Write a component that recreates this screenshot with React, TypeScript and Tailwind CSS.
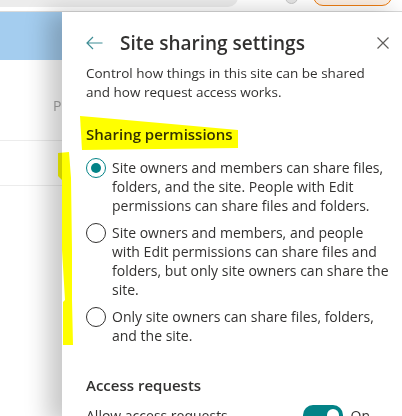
import React, { useState } from 'react'

type Choice = {
  id: string
  lines: string[]
}

const choices: Choice[] = [
  {
    id: 'members',
    lines: [
      'Site owners and members can share files,',
      'folders, and the site. People with Edit',
      'permissions can share files and folders.',
    ],
  },
  {
    id: 'members-edit',
    lines: [
      'Site owners and members, and people',
      'with Edit permissions can share files and',
      'folders, but only site owners can share the',
      'site.',
    ],
  },
  {
    id: 'owners',
    lines: ['Only site owners can share files, folders,', 'and the site.'],
  },
]

function Radio({ checked }: { checked: boolean }) {
  return (
    <span
      className={`flex h-[20px] w-[20px] shrink-0 items-center justify-center rounded-full border ${
        checked ? 'border-[#038387]' : 'border-[#323130]'
      }`}
    >
      {checked && <span className="h-[10px] w-[10px] rounded-full bg-[#038387]" />}
    </span>
  )
}

export default function App() {
  const [selected, setSelected] = useState('members')

  return (
    <div className="relative flex h-[416px] w-[402px] flex-col overflow-hidden bg-white font-['Open_Sans',sans-serif] text-[#323130]">
      {/* browser chrome strip */}
      <div className="relative h-[12px] shrink-0 border-b border-[#dadada] bg-white">
        <div className="absolute left-[-20px] top-[-12px] h-[19px] w-[258px] rounded-br-[10px] bg-[#ececec]" />
        <div className="absolute left-[285px] top-[-9px] h-[13px] w-[13px] rounded-full border border-[#c8c8c8] bg-[#e6e6e6]" />
        <div className="absolute left-[313px] top-[-14px] h-[20px] w-[79px] rounded-[10px] border-[1.5px] border-[#ee7d10] bg-[#fdf0e4]" />
      </div>

      <div className="flex flex-1">
        {/* page behind the panel */}
        <div className="flex w-[62px] shrink-0 flex-col">
          <div className="h-[48px] bg-[#a4cdef]" />
          <div className="relative flex-1 bg-white">
            <span className="absolute left-[53px] top-[36px] text-[14px] leading-[19px] text-[#a6a6a6]">P</span>
            <div className="absolute left-0 right-0 top-[80px] border-t border-[#ececec]" />
            <div className="absolute left-0 right-0 top-[125px] border-t border-[#ececec]" />
          </div>
        </div>

        {/* side panel */}
        <div className="relative z-10 flex-1 bg-white pl-[24px] pr-[16px] pt-[16px] shadow-[-14px_0_22px_rgba(0,0,0,0.22)]">
          <div className="flex h-[30px] items-center">
            <svg width="17" height="14" viewBox="0 0 17 14" className="shrink-0">
              <path d="M7 1 L1 7 L7 13 M1 7 H16.5" fill="none" stroke="#3f8d95" strokeWidth="1.2" />
            </svg>
            <h1 className="ml-[17px] whitespace-nowrap text-[19px] font-semibold leading-[30px]">Site sharing settings</h1>
            <svg width="12" height="12" viewBox="0 0 12 12" className="ml-auto shrink-0">
              <path d="M0.5 0.5 L11.5 11.5 M11.5 0.5 L0.5 11.5" fill="none" stroke="#605e5c" strokeWidth="1.2" />
            </svg>
          </div>

          <p className="mt-[6px] whitespace-nowrap text-[13.5px] leading-[19px]">
            Control how things in this site can be shared
            <br />
            and how request access works.
          </p>

          <h2 className="mt-[21px] whitespace-nowrap text-[15px] font-semibold leading-[22px]">Sharing permissions</h2>

          <div className="mt-[13px] flex flex-col gap-[8px]">
            {choices.map((c) => (
              <label key={c.id} className="flex cursor-pointer items-start gap-[6px]" onClick={() => setSelected(c.id)}>
                <Radio checked={selected === c.id} />
                <span className="whitespace-nowrap text-[14px] leading-[19px]">
                  {c.lines.map((l, i) => (
                    <React.Fragment key={i}>
                      {i > 0 && <br />}
                      {l}
                    </React.Fragment>
                  ))}
                </span>
              </label>
            ))}
          </div>

          <h2 className="mt-[29px] whitespace-nowrap text-[15px] font-semibold leading-[22px]">Access requests</h2>

          <div className="mr-[12px] mt-[9px] flex items-center">
            <span className="whitespace-nowrap text-[14px] leading-[19px]">Allow access requests</span>
            <span className="ml-auto flex h-[20px] w-[40px] items-center justify-end rounded-full bg-[#038387] px-[4px]">
              <span className="h-[12px] w-[12px] rounded-full bg-white" />
            </span>
            <span className="ml-[8px] w-[26px] text-[14px] leading-[19px]">On</span>
          </div>
        </div>
      </div>

      {/* yellow marker annotations */}
      <svg
        className="pointer-events-none absolute left-0 top-0 z-20 mix-blend-multiply"
        width="402"
        height="416"
        viewBox="0 0 402 416"
      >
        <polygon points="80,116 92,117 160,123 238,130 238,148 160,149 82,150" fill="#ffff00" />
        <polygon points="58,153 69,152 71,178 72,250 72,300 73,345 63,345 63,302 65,300 62,250 62,180 58,176" fill="#ffff00" />
      </svg>
    </div>
  )
}
